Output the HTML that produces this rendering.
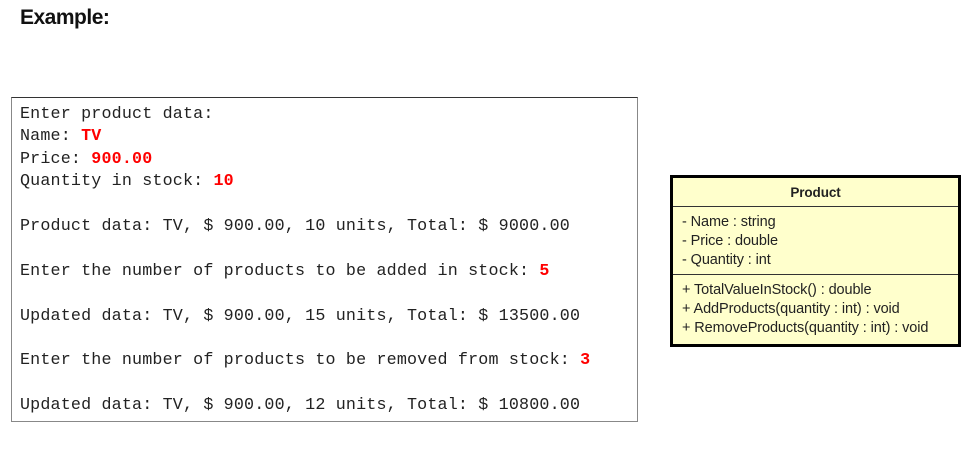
<!DOCTYPE html>
<html><head><meta charset="utf-8"><style>
body{margin:0;width:967px;height:452px;background:#fff;position:relative;overflow:hidden}
.h{position:absolute;left:20px;top:6px;font:bold 21px "Liberation Sans",sans-serif;color:#111;letter-spacing:-0.5px}
.con{position:absolute;left:11px;top:97px;width:627px;height:325px;border:1px solid #888;border-top-color:#333;box-sizing:border-box}
.con pre{margin:0;position:absolute;left:8px;top:6px;font:16.7px/22.4px "Liberation Mono",monospace;letter-spacing:0.17px;color:#222}
.r{color:#f00;font-weight:bold}
.uml{position:absolute;left:670px;top:175px;width:291px;height:172px;border:3px solid #000;box-sizing:border-box;background:#ffffcc;font:14.5px "Liberation Sans",sans-serif;color:#222;letter-spacing:-0.1px}
.t{height:28px;border-bottom:1.5px solid #333;text-align:center;font-weight:bold;line-height:30px;font-size:13.5px}
.s{padding:6px 0 0 9px;line-height:19px;height:68px;box-sizing:border-box;border-bottom:1.5px solid #333}
.s2{padding:6px 0 0 9px;line-height:19px}
</style></head><body>
<div class="h">Example:</div>
<div class="con"><pre>Enter product data:
Name: <span class="r">TV</span>
Price: <span class="r">900.00</span>
Quantity in stock: <span class="r">10</span>

Product data: TV, $ 900.00, 10 units, Total: $ 9000.00

Enter the number of products to be added in stock: <span class="r">5</span>

Updated data: TV, $ 900.00, 15 units, Total: $ 13500.00

Enter the number of products to be removed from stock: <span class="r">3</span>

Updated data: TV, $ 900.00, 12 units, Total: $ 10800.00</pre></div>
<div class="uml">
<div class="t">Product</div>
<div class="s">- Name : string<br>- Price : double<br>- Quantity : int</div>
<div class="s2">+ TotalValueInStock() : double<br>+ AddProducts(quantity : int) : void<br>+ RemoveProducts(quantity : int) : void</div>
</div>
</body></html>
